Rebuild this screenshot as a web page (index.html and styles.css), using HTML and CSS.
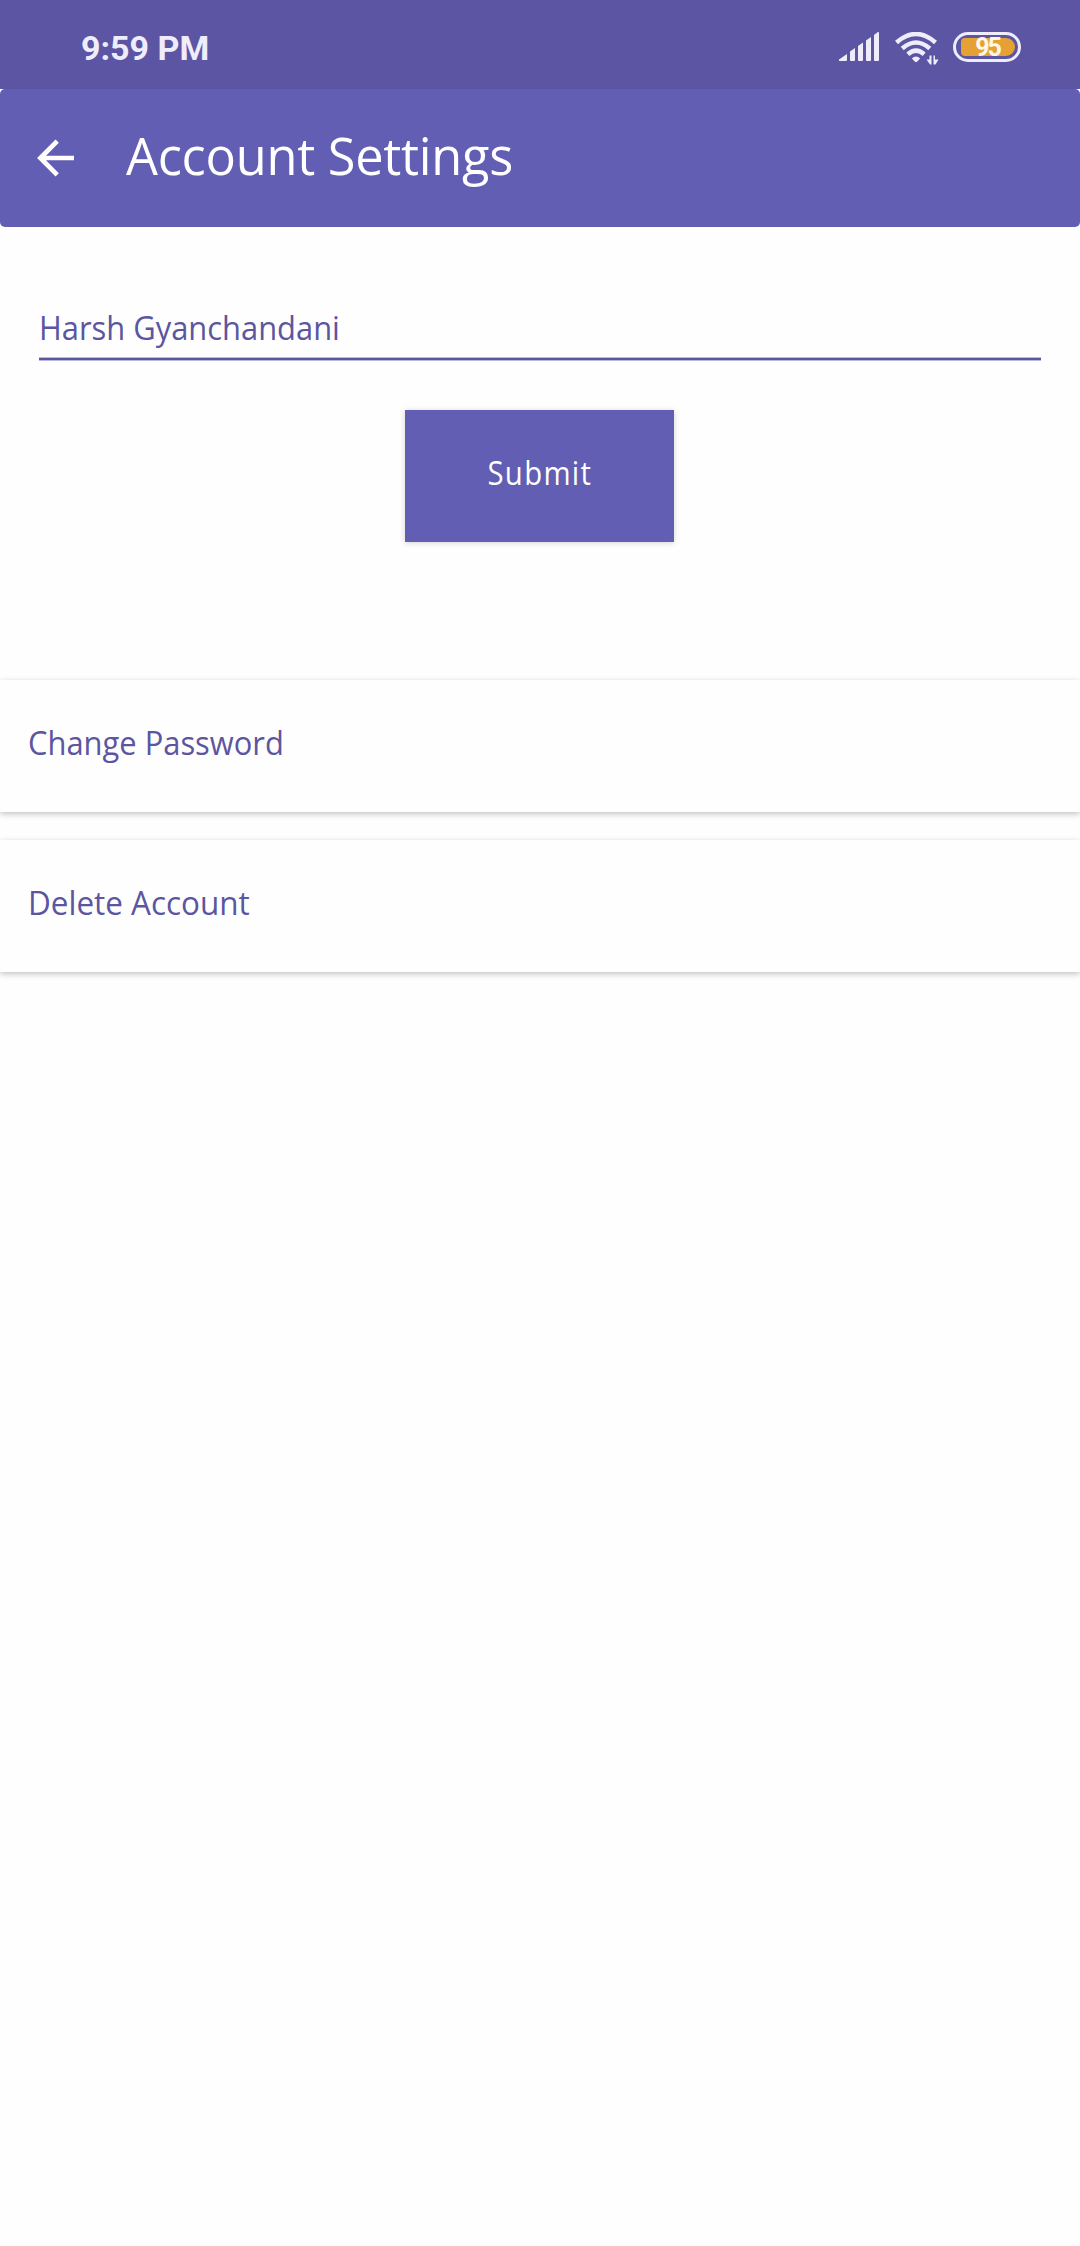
FILE: index.html
```html
<!DOCTYPE html>
<html lang="en">
<head>
<meta charset="utf-8">
<title>Account Settings</title>
<link rel="stylesheet" href="styles.css">
</head>
<body>
<div class="status-bar">
  <span class="clock">9:59 PM</span>
  <div class="status-icons">
    <svg class="signal" width="42" height="30" viewBox="0 0 42 30" fill="#efecfb">
      <path d="M0 29V27.500L8 22V28Q8 29 7 29H1Q0 29 0 29Z"/>
      <path d="M11 19.500L16 16V28Q16 29 15 29H12Q11 29 11 28Z"/>
      <path d="M19 14L24 10.500V28Q24 29 23 29H20Q19 29 19 28Z"/>
      <path d="M27 8.500L32 5V28Q32 29 31 29H28Q27 29 27 28Z"/>
      <path d="M35 3L38.500 .3Q40 -.3 40 1V28Q40 29 39 29H36Q35 29 35 28Z"/>
    </svg>
    <svg class="wifi" width="44" height="34" viewBox="0 0 44 34">
      <g fill="none" stroke="#efecfb" stroke-width="4.500">
        <path d="M1.500 10.500Q21 -6.500 40.500 10.500"/>
        <path d="M7.200 16.500Q21 4.500 34.800 16.500"/>
        <path d="M12.800 22.300Q21 15 29.200 22.300"/>
      </g>
      <path d="M16.800 26.500Q21 22.500 25.200 26.500L22 29.800Q21 30.600 20 29.800Z" fill="#efecfb"/>
      <path d="M31.500 27.500H34.500V23.500H36.500V32.500H35ZM38.500 23.500H40V27.500H43.500L40.500 32.500H38.500Z" fill="#efecfb"/>
    </svg>
    <div class="battery"><span class="charge">95</span></div>
  </div>
</div>
<header class="app-bar">
  <svg class="back" width="38" height="38" viewBox="0 0 38 38" fill="none" stroke="#fff" stroke-width="4.700">
    <path d="M37 19H4M20.200 2.200L3.400 19L20.200 35.800"/>
  </svg>
  <h1 class="title">Account Settings</h1>
</header>
<main>
  <div class="form">
    <div class="field"><span class="label">Harsh Gyanchandani</span></div>
    <button class="submit"><span class="submit-label">Submit</span></button>
  </div>
  <div class="options">
    <div class="option"><span class="label">Change Password</span></div>
    <div class="option"><span class="label delete">Delete Account</span></div>
  </div>
</main>
</body>
</html>
```
FILE: styles.css
```css
* { box-sizing: border-box; }
body {
  margin: 0;
  min-height: 2246px;
  background: #fefefe;
  color: #5c55a0;
  font-family: "Open Sans", "Noto Sans", sans-serif;
  font-size: 33.500px;
  font-weight: 370;
}
.status-bar {
  height: 89px;
  display: flex;
  justify-content: space-between;
  padding: 0 59px 0 81px;
  background: #5b55a3;
}
.clock {
  padding-top: 28px;
  font: 700 34px/40px Roboto, sans-serif;
  color: #efecfb;
}
.status-icons { display: flex; padding-top: 32px; }
.signal { margin-right: 14px; }
.wifi { margin-right: 14px; }
.battery {
  width: 68px;
  height: 30px;
  padding: 3px;
  border: 3px solid #efecfb;
  border-radius: 15px;
}
.charge {
  display: block;
  width: 54px;
  height: 18px;
  margin-left: 2px;
  padding-right: 1px;
  border-radius: 4px 9px 9px 4px;
  background: #e5a134;
  color: #fff8e8;
  font: 700 25px/20px Roboto, sans-serif;
  letter-spacing: -2px;
  text-align: center;
}
.app-bar {
  height: 138px;
  display: flex;
  align-items: flex-start;
  padding: 50px 0 0 37px;
  border-radius: 5px;
  background: #615eb4;
}
.title {
  margin: -17px 0 0 51px;
  color: #fff;
  font-size: 50.500px;
  font-weight: 400;
  line-height: 68px;
  letter-spacing: -.25px;
  white-space: nowrap;
}
.label {
  display: inline-block;
  transform: scaleX(.922);
  transform-origin: left;
}
.delete { transform: scaleX(.938); }
.form {
  padding: 73px 39px 0;
  display: flex;
  flex-direction: column;
  align-items: center;
}
.field {
  width: 100%;
  height: 60px;
  border-bottom: 2px solid #5c55a0;
  box-shadow: 0 1px #bcb9df, inset 0 -1px #bcb9df;
  line-height: 55px;
}
.submit {
  width: 269px;
  height: 132px;
  margin: 50px 1px 0 0;
  padding: 0 0 8px;
  border: 0;
  background: #615eb4;
  color: #fff;
  font: inherit;
  box-shadow: 0 1px 6px rgba(0, 0, 0, .17);
}
.submit-label {
  display: inline-block;
  letter-spacing: 1.500px;
  transform: scaleX(.875);
}
.options {
  display: flex;
  flex-direction: column;
  gap: 28px;
  margin-top: 138px;
}
.option {
  height: 132px;
  padding-left: 28px;
  line-height: 125px;
  box-shadow: 0 2px 6px rgba(0, 0, 0, .24);
}
```
